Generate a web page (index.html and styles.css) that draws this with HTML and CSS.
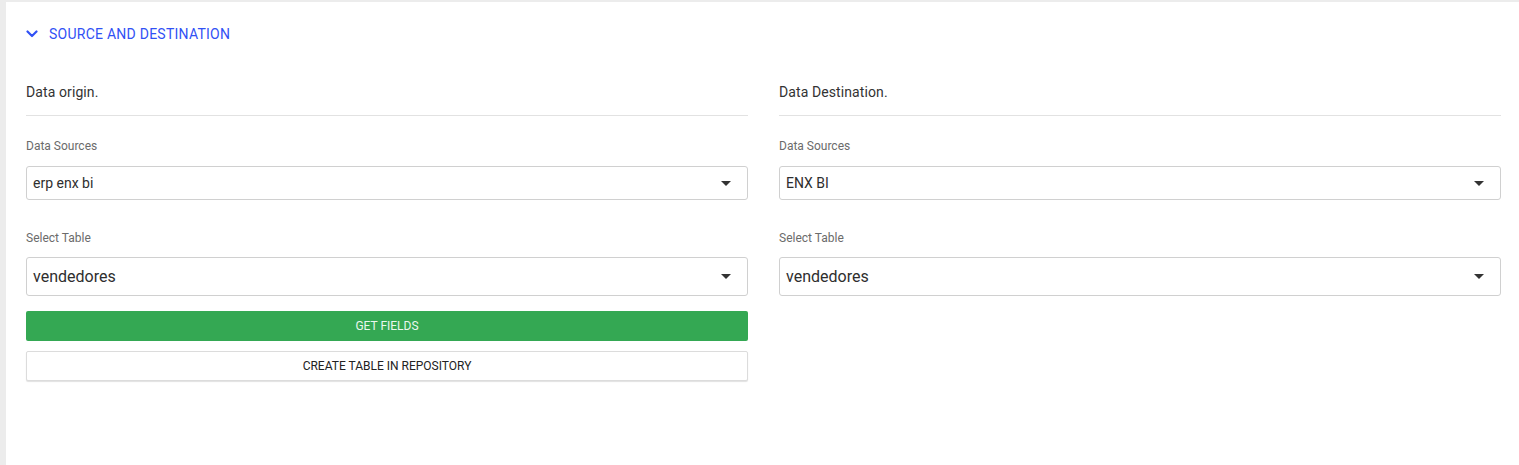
FILE: index.html
```html
<!DOCTYPE html>
<html>
<head>
<meta charset="utf-8">
<link rel="stylesheet" href="styles.css">
</head>
<body>
<div class="card">
  <div class="section-header">
    <svg class="chevron" width="12" height="8" viewBox="0 0 12 8"><path d="M1.5 1.5 L6 6 L10.5 1.5" fill="none" stroke="currentColor" stroke-width="2.2" stroke-linecap="round" stroke-linejoin="round"/></svg>
    <span>SOURCE AND DESTINATION</span>
  </div>
  <div class="columns">
    <div class="col">
      <div class="col-title">Data origin.</div>
      <div class="label label-first">Data Sources</div>
      <div class="select small"><span>erp enx bi</span><i class="caret"></i></div>
      <div class="label">Select Table</div>
      <div class="select large"><span>vendedores</span><i class="caret"></i></div>
      <div class="btn btn-green">GET FIELDS</div>
      <div class="btn btn-white">CREATE TABLE IN REPOSITORY</div>
    </div>
    <div class="col">
      <div class="col-title">Data Destination.</div>
      <div class="label label-first">Data Sources</div>
      <div class="select small"><span>ENX BI</span><i class="caret"></i></div>
      <div class="label">Select Table</div>
      <div class="select large"><span>vendedores</span><i class="caret"></i></div>
    </div>
  </div>
</div>
</body>
</html>
```

FILE: styles.css
```css
html, body {
  margin: 0;
  padding: 0;
  background: #ececec;
  font-family: Roboto, "Liberation Sans", Arial, sans-serif;
}
.card {
  margin: 2px 0 0 6px;
  background: #ffffff;
  padding: 21px 18px 0 20px;
  min-height: 480px;
  box-sizing: border-box;
}
.section-header {
  display: flex;
  align-items: center;
  height: 22px;
  color: #3151f5;
  font-size: 14px;
  letter-spacing: 0.25px;
}
.chevron {
  margin-right: 11px;
}
.columns {
  display: grid;
  grid-template-columns: 1fr 1fr;
  gap: 31px;
  margin-top: 37px;
}
.col {
  display: flex;
  flex-direction: column;
}
.col-title {
  font-size: 14px;
  line-height: 20px;
  color: #333;
  letter-spacing: 0.1px;
  padding-bottom: 13px;
  border-bottom: 1px solid #e2e2e2;
}
.label {
  font-size: 12px;
  line-height: 16px;
  color: #6b6b6b;
  margin-top: 30px;
  margin-bottom: 11px;
}
.label-first {
  margin-top: 22px;
  margin-bottom: 12px;
}
.select {
  display: flex;
  align-items: center;
  justify-content: space-between;
  border: 1px solid #d0d0d0;
  border-radius: 3px;
  box-sizing: border-box;
  padding: 0 16px 0 6px;
  color: #2e2e2e;
}
.select.small {
  height: 34px;
  font-size: 14px;
}
.select.large {
  height: 39px;
  font-size: 16px;
}
.caret {
  width: 0;
  height: 0;
  border-left: 5px solid transparent;
  border-right: 5px solid transparent;
  border-top: 5px solid #333;
}
.btn {
  height: 30px;
  display: flex;
  align-items: center;
  justify-content: center;
  font-size: 12px;
  border-radius: 2px;
  box-sizing: border-box;
}
.btn-green {
  margin-top: 15px;
  background: #34a853;
  color: #eaf7ee;
}
.btn-white {
  margin-top: 10px;
  background: #fff;
  border: 1px solid #dcdcdc;
  box-shadow: 0 1px 1px rgba(0,0,0,0.12);
  color: #222;
}
```
